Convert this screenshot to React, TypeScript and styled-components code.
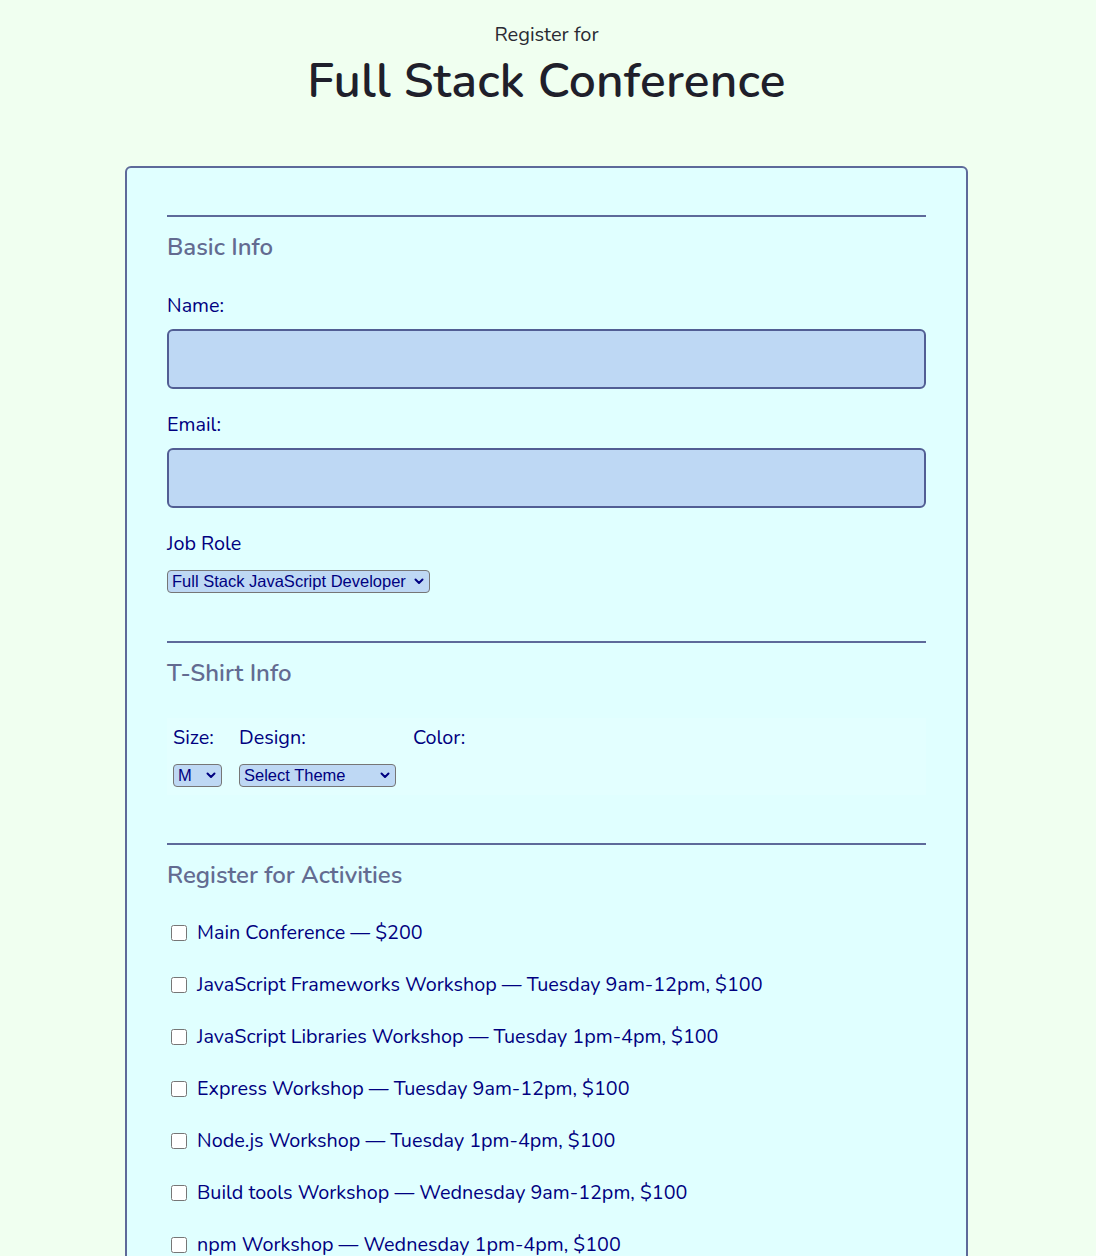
import React from "react";
import styled, { createGlobalStyle } from "styled-components";

const Global = createGlobalStyle`
  html, body { margin: 0; padding: 0; }
  body {
    background: #f0fff0;
    font-family: "Nunito", "Lato", "Noto Sans", sans-serif;
    color: #000080;
  }
`;

const Page = styled.div`
  padding-right: 3px;
`;

const Header = styled.header`
  display: flex;
  flex-direction: column;
  align-items: center;
  padding-top: 23px;
  padding-bottom: 57px;
`;

const Kicker = styled.div`
  font-size: 20px;
  line-height: 24px;
  color: #2a2a33;
`;

const Title = styled.h1`
  margin: 6px 0 0;
  font-size: 48px;
  line-height: 56px;
  font-weight: 600;
  color: #1f1f2b;
  letter-spacing: 0.2px;
`;

const Card = styled.form`
  box-sizing: border-box;
  width: 843px;
  margin: 0 auto;
  background: #e0ffff;
  border: 2px solid #5e6a9a;
  border-radius: 6px;
  padding: 47px 40px 40px;
`;

const Section = styled.section`
  border-top: 2px solid #5e6a9a;
  padding-top: 16px;
  margin-bottom: 48px;
  display: flex;
  flex-direction: column;
`;

const SectionTitle = styled.h2`
  margin: 0;
  font-size: 24px;
  line-height: 29px;
  font-weight: 600;
  color: #636b91;
`;

const Label = styled.label<{ $top?: number }>`
  display: block;
  font-size: 19.8px;
  line-height: 27px;
  margin-top: ${(p) => p.$top ?? 0}px;
  color: #000080;
`;

const TextInput = styled.input`
  box-sizing: border-box;
  width: 100%;
  height: 60px;
  margin-top: 10px;
  background: #bed8f4;
  border: 2px solid #525e94;
  border-radius: 6px;
`;

const SelectWrap = styled.div<{ $w: number; $top?: number }>`
  position: relative;
  width: ${(p) => p.$w}px;
  height: 23px;
  margin-top: ${(p) => p.$top ?? 0}px;
`;

const Select = styled.select`
  appearance: none;
  -webkit-appearance: none;
  box-sizing: border-box;
  width: 100%;
  height: 23px;
  font-family: "Liberation Sans", Arial, sans-serif;
  font-size: 16.5px;
  line-height: 21px;
  color: #000080;
  background-color: #bed8f4;
  border: 1px solid #767676;
  border-radius: 4px;
  padding: 0 20px 0 4px;
  margin: 0;
`;

const Chevron = styled.svg`
  position: absolute;
  right: 6px;
  top: 8px;
  width: 10px;
  height: 7px;
  pointer-events: none;
`;

const ShirtBox = styled.div`
  margin-top: 30px;
  padding: 6px 6px 8px;
  display: flex;
  gap: 17px;
  background: rgba(230, 255, 255, 0.5);
`;

const ShirtCol = styled.div`
  display: flex;
  flex-direction: column;
  gap: 13px;
`;

const ActivityList = styled.div`
  margin-top: 29px;
  display: flex;
  flex-direction: column;
  gap: 25px;
`;

const Activity = styled.label`
  display: flex;
  align-items: center;
  gap: 10px;
  padding-left: 4px;
  font-size: 19.8px;
  line-height: 27px;
  color: #000080;
`;

const Check = styled.input`
  margin: 0;
  width: 16px;
  height: 16px;
`;

const activities = [
  "Main Conference — $200",
  "JavaScript Frameworks Workshop — Tuesday 9am-12pm, $100",
  "JavaScript Libraries Workshop — Tuesday 1pm-4pm, $100",
  "Express Workshop — Tuesday 9am-12pm, $100",
  "Node.js Workshop — Tuesday 1pm-4pm, $100",
  "Build tools Workshop — Wednesday 9am-12pm, $100",
  "npm Workshop — Wednesday 1pm-4pm, $100",
];

function DropSelect({
  id,
  width,
  top,
  defaultValue,
  children,
}: {
  id: string;
  width: number;
  top?: number;
  defaultValue: string;
  children: React.ReactNode;
}) {
  return (
    <SelectWrap $w={width} $top={top}>
      <Select id={id} defaultValue={defaultValue}>
        {children}
      </Select>
      <Chevron viewBox="0 0 10 7">
        <polyline
          points="1.5,1.5 5,5 8.5,1.5"
          fill="none"
          stroke="#000080"
          strokeWidth="2"
          strokeLinecap="round"
          strokeLinejoin="round"
        />
      </Chevron>
    </SelectWrap>
  );
}

export default function App() {
  return (
    <Page>
      <Global />
      <Header>
        <Kicker>Register for</Kicker>
        <Title>Full Stack Conference</Title>
      </Header>
      <Card onSubmit={(e) => e.preventDefault()}>
        <Section>
          <SectionTitle>Basic Info</SectionTitle>
          <Label $top={30} htmlFor="name">Name:</Label>
          <TextInput id="name" type="text" />
          <Label $top={22} htmlFor="mail">Email:</Label>
          <TextInput id="mail" type="email" />
          <Label $top={22} htmlFor="title">Job Role</Label>
          <DropSelect id="title" width={263} top={13} defaultValue="fs">
            <option value="fs">Full Stack JavaScript Developer</option>
            <option value="fe">Front End Developer</option>
            <option value="be">Back End Developer</option>
          </DropSelect>
        </Section>
        <Section>
          <SectionTitle>T-Shirt Info</SectionTitle>
          <ShirtBox>
            <ShirtCol>
              <Label htmlFor="size">Size:</Label>
              <DropSelect id="size" width={49} defaultValue="m">
                <option value="s">S</option>
                <option value="m">M</option>
                <option value="l">L</option>
              </DropSelect>
            </ShirtCol>
            <ShirtCol>
              <Label htmlFor="design">Design:</Label>
              <DropSelect id="design" width={157} defaultValue="">
                <option value="">Select Theme</option>
                <option value="js">JS Puns</option>
                <option value="heart">I ♥ JS</option>
              </DropSelect>
            </ShirtCol>
            <ShirtCol>
              <Label>Color:</Label>
            </ShirtCol>
          </ShirtBox>
        </Section>
        <Section>
          <SectionTitle>Register for Activities</SectionTitle>
          <ActivityList>
            {activities.map((a) => (
              <Activity key={a}>
                <Check type="checkbox" />
                {a}
              </Activity>
            ))}
          </ActivityList>
        </Section>
      </Card>
    </Page>
  );
}
